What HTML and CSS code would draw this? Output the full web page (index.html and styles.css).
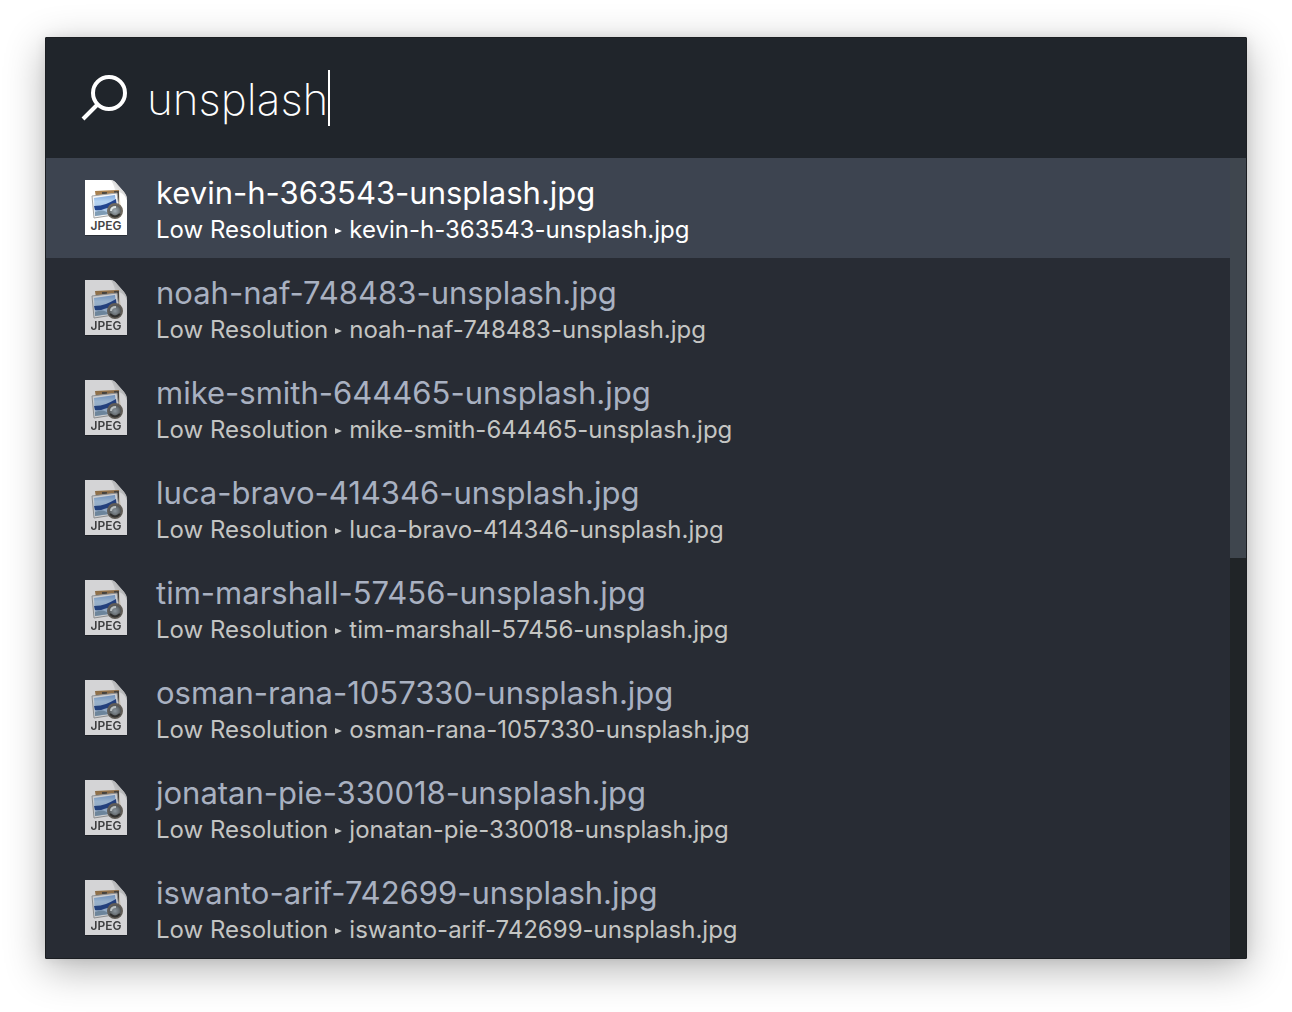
FILE: index.html
```html
<!DOCTYPE html>
<html lang="en">
<head>
<meta charset="utf-8">
<meta name="viewport" content="width=device-width, initial-scale=1">
<title>File search</title>
<link rel="stylesheet" href="styles.css">
</head>
<body>
<svg class="sprite" aria-hidden="true">
  <defs>
    <linearGradient id="sky" x1="0" y1="0" x2="0" y2="1">
      <stop offset="0" stop-color="#7ea8dd"/>
      <stop offset=".3" stop-color="#b5d3f2"/>
      <stop offset="1" stop-color="#a9c3df"/>
    </linearGradient>
    <linearGradient id="curl" x1="0" y1="1" x2="1" y2="0">
      <stop offset="0" stop-color="#fff"/>
      <stop offset=".5" stop-color="#e2e2e2"/>
      <stop offset="1" stop-color="#a9a9a9"/>
    </linearGradient>
    <radialGradient id="lens">
      <stop offset="0" stop-color="#a5b0b8"/>
      <stop offset=".6" stop-color="#777f82"/>
      <stop offset="1" stop-color="#4a4a49"/>
    </radialGradient>
    <filter id="soft" x="-10%" y="-10%" width="120%" height="120%">
      <feGaussianBlur stdDeviation=".7"/>
    </filter>
  </defs>
  <symbol id="jpeg" viewBox="0 0 44 58">
    <path d="M1 1h26q4 0 7 4l6 8q3 3 3 7v36H1z" fill="#000" opacity=".3"/>
    <path d="M1 0h25q4 0 7 4l7 8q3 4 3 8v35H1z" fill="#fff"/>
    <path d="M27 0q4 7 4 11 9 1 12 9 0-5-3-8l-7-8q-3-4-6-4z" fill="url(#curl)"/>
    <g filter="url(#soft)">
      <path d="M11 11l24-1 2 20-22 2z" fill="#e9dcc4"/>
      <path d="M11 11l24-1v5l-23 2z" fill="#a88050"/>
      <path d="M18 12h5v2h-5zM30 11h5v11h-3z" fill="#4f483f"/>
      <path d="M8 16l25-3 3 21-26 4z" fill="#f6f6f6" stroke="#a5a5a5" stroke-width="1"/>
      <path d="M10 18l21-3 2 18-22 3z" fill="url(#sky)"/>
      <path d="M10 26q7 0 12-2t10-5l1 9q-9-1-13 1-4 2-9 1z" fill="#24458f"/>
      <path d="M11 32q9-4 14 2l-14 2z" fill="#7f9cb5"/>
      <circle cx="31" cy="31" r="7" fill="url(#lens)" stroke="#6f695f" stroke-width="2"/>
      <path d="M27 31q0-4 5-4" fill="none" stroke="#dfe6e6" stroke-width="2"/>
      <path d="M26 34q5 5 10 0" fill="none" stroke="#33332f" stroke-width="2"/>
    </g>
  </symbol>
</svg>

<main class="window">
  <form class="search" role="search">
    <svg class="search-icon" viewBox="0 0 48 48" aria-hidden="true">
      <circle cx="29" cy="19" r="16"/>
      <path d="M18 30 3 45"/>
    </svg>
    <input class="search-input" type="text" value="unsplash" aria-label="Search files" autocomplete="off" spellcheck="false">
    <span class="caret" aria-hidden="true"></span>
  </form>

  <div class="results">
    <ul class="list">
      <li><a class="item selected" href="#"><svg class="file-icon" aria-hidden="true"><use href="#jpeg"/><text x="22" y="50">JPEG</text></svg><span class="text"><span class="name">kevin-h-363543-unsplash.jpg</span><span class="path">Low Resolution<i class="sep"></i>kevin-h-363543-unsplash.jpg</span></span></a></li>
      <li><a class="item" href="#"><svg class="file-icon" aria-hidden="true"><use href="#jpeg"/><text x="22" y="50">JPEG</text></svg><span class="text"><span class="name">noah-naf-748483-unsplash.jpg</span><span class="path">Low Resolution<i class="sep"></i>noah-naf-748483-unsplash.jpg</span></span></a></li>
      <li><a class="item" href="#"><svg class="file-icon" aria-hidden="true"><use href="#jpeg"/><text x="22" y="50">JPEG</text></svg><span class="text"><span class="name">mike-smith-644465-unsplash.jpg</span><span class="path">Low Resolution<i class="sep"></i>mike-smith-644465-unsplash.jpg</span></span></a></li>
      <li><a class="item" href="#"><svg class="file-icon" aria-hidden="true"><use href="#jpeg"/><text x="22" y="50">JPEG</text></svg><span class="text"><span class="name">luca-bravo-414346-unsplash.jpg</span><span class="path">Low Resolution<i class="sep"></i>luca-bravo-414346-unsplash.jpg</span></span></a></li>
      <li><a class="item" href="#"><svg class="file-icon" aria-hidden="true"><use href="#jpeg"/><text x="22" y="50">JPEG</text></svg><span class="text"><span class="name">tim-marshall-57456-unsplash.jpg</span><span class="path">Low Resolution<i class="sep"></i>tim-marshall-57456-unsplash.jpg</span></span></a></li>
      <li><a class="item" href="#"><svg class="file-icon" aria-hidden="true"><use href="#jpeg"/><text x="22" y="50">JPEG</text></svg><span class="text"><span class="name">osman-rana-1057330-unsplash.jpg</span><span class="path">Low Resolution<i class="sep"></i>osman-rana-1057330-unsplash.jpg</span></span></a></li>
      <li><a class="item" href="#"><svg class="file-icon" aria-hidden="true"><use href="#jpeg"/><text x="22" y="50">JPEG</text></svg><span class="text"><span class="name">jonatan-pie-330018-unsplash.jpg</span><span class="path">Low Resolution<i class="sep"></i>jonatan-pie-330018-unsplash.jpg</span></span></a></li>
      <li><a class="item" href="#"><svg class="file-icon" aria-hidden="true"><use href="#jpeg"/><text x="22" y="50">JPEG</text></svg><span class="text"><span class="name">iswanto-arif-742699-unsplash.jpg</span><span class="path">Low Resolution<i class="sep"></i>iswanto-arif-742699-unsplash.jpg</span></span></a></li>
    </ul>
    <div class="scrollbar" aria-hidden="true"><div class="thumb"></div></div>
  </div>
</main>
</body>
</html>
```

FILE: styles.css
```css
* {
  box-sizing: border-box;
}

body {
  margin: 0;
  padding: 37px 45px 53px;
  background: #fff;
  font-family: Inter, "Liberation Sans", sans-serif;
}

.sprite {
  position: absolute;
  width: 0;
  height: 0;
}

.window {
  border: 1px solid #1b1e22;
  border-radius: 1px;
  background: #282c34;
  box-shadow: 0 10px 40px rgba(0, 0, 0, .3), 0 0 12px rgba(0, 0, 0, .08);
}

.search {
  display: flex;
  align-items: center;
  height: 120px;
  padding: 0 34px;
  background: #20252b;
}

.search-icon {
  flex: none;
  width: 48px;
  height: 48px;
  margin-right: 19px;
  fill: none;
  stroke: #fff;
  stroke-width: 4;
}

.search-input {
  field-sizing: content;
  height: 62px;
  padding: 2px 0 0;
  border: 0;
  outline: 0;
  background: none;
  color: #fff;
  font: 200 44px/60px Inter, "Liberation Sans", sans-serif;
}

.caret {
  width: 2px;
  height: 56px;
  background: #fff;
}

.results {
  display: grid;
  grid-template-columns: 1fr 16px;
}

.list {
  margin: 0;
  padding: 0;
  list-style: none;
}

.item {
  display: flex;
  align-items: center;
  gap: 28px;
  height: 100px;
  padding: 2px 0 0 38px;
  color: #c4c5c3;
  text-decoration: none;
}

.item .name {
  color: #a9b1c1;
}

.file-icon {
  flex: none;
  width: 44px;
  height: 58px;
  opacity: .8;
}

.file-icon text {
  fill: #444;
  font: 600 12px Inter, "Liberation Sans", sans-serif;
  text-anchor: middle;
}

.text {
  display: flex;
  flex-direction: column;
  padding-top: 2px;
}

.name {
  font-size: 31px;
  line-height: 40px;
}

.path {
  font-size: 24px;
  line-height: 34px;
}

.sep {
  display: inline-block;
  margin: 0 7px 4px 7px;
  border-left: 7px solid currentColor;
  border-top: 3px solid transparent;
  border-bottom: 3px solid transparent;
}

.selected {
  background: #3d4450;
  color: #fff;
}

.selected .name {
  color: #fff;
}

.selected .file-icon {
  opacity: 1;
}

.scrollbar {
  background: #202427;
}

.thumb {
  height: 50%;
  background: #3f464e;
}
```
